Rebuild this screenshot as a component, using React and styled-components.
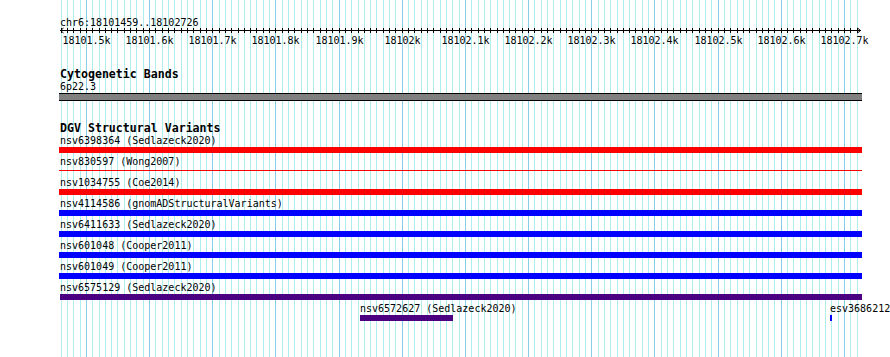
import React from 'react'
import styled, { createGlobalStyle } from 'styled-components'

// genome view: chr6:18101459..18102726 drawn from x=60
const VIEW_START = 18101459
const VIEW_END = 18102726
const ORIGIN = 60
const PX_PER_BP = 0.6317
const VIEW_LEFT = 59
const VIEW_RIGHT = 862
const PAGE_W = 890
const PAGE_H = 357

const bpToX = (bp) => ORIGIN + (bp - VIEW_START) * PX_PER_BP

const ticks = []
for (let bp = Math.ceil(VIEW_START / 10) * 10; bp <= VIEW_END; bp += 10) {
  ticks.push({ bp, x: Math.round(bpToX(bp)), major: bp % 100 === 0 })
}

const RED = '#ff0000'
const BLUE = '#0000ff'
const PURPLE = '#4b0082'

const rows = [
  [{ name: 'nsv6398364 (Sedlazeck2020)', start: 18100000, end: 18104000, color: RED }],
  [{ name: 'nsv830597 (Wong2007)', start: 18100000, end: 18104000, color: RED, thin: true }],
  [{ name: 'nsv1034755 (Coe2014)', start: 18100000, end: 18104000, color: RED }],
  [{ name: 'nsv4114586 (gnomADStructuralVariants)', start: 18100000, end: 18104000, color: BLUE }],
  [{ name: 'nsv6411633 (Sedlazeck2020)', start: 18100000, end: 18104000, color: BLUE }],
  [{ name: 'nsv601048 (Cooper2011)', start: 18100000, end: 18104000, color: BLUE }],
  [{ name: 'nsv601049 (Cooper2011)', start: 18100000, end: 18104000, color: BLUE }],
  [{ name: 'nsv6575129 (Sedlazeck2020)', start: 18101459, end: 18104000, color: PURPLE }],
  [
    { name: 'nsv6572627 (Sedlazeck2020)', start: 18101934, end: 18102081, color: PURPLE },
    { name: 'esv3686212', start: 18102678, end: 18102681, color: BLUE },
  ],
]

const App = () => {
  return (
    <>
      <GlobalStyle />
      <Page>
        <GridLayer width={PAGE_W} height={PAGE_H} shapeRendering="crispEdges">
          {ticks.map((t) => (
            <rect key={t.bp} x={t.x} y={0} width={1} height={PAGE_H}
              fill={t.major ? '#87ceeb' : '#afeeee'} />
          ))}
        </GridLayer>
        <Content>
          <Location>chr6:18101459..18102726</Location>
          <Ruler />
          <TrackTitle $gap={19}>Cytogenetic Bands</TrackTitle>
          <SmallLabel>6p22.3</SmallLabel>
          <BandBar />
          <TrackTitle $gap={20}>DGV Structural Variants</TrackTitle>
          {rows.map((row, i) => (
            <Row key={i}>
              {row.map((f) => {
                const x = Math.max(VIEW_LEFT, Math.round(bpToX(f.start)))
                const right = Math.min(VIEW_RIGHT, Math.round(bpToX(f.end)))
                return (
                  <Feature key={f.name} style={{ left: x }}>
                    <SmallLabel style={{ paddingLeft: Math.max(0, ORIGIN - x) }}>{f.name}</SmallLabel>
                    <FeatureBar $color={f.color} $thin={f.thin} style={{ width: right - x }} />
                  </Feature>
                )
              })}
            </Row>
          ))}
        </Content>
      </Page>
    </>
  )
}

const Ruler = () => (
  <RulerSvg width={PAGE_W} height={20}>
    <g shapeRendering="crispEdges">
      <rect x={60} y={2} width={801} height={1} fill="#000" />
      {ticks.map((t) => (
        <rect key={t.bp} x={t.x} y={0} width={1} height={5} fill="#000" />
      ))}
    </g>
    <polyline points="63.5,0 60.5,2.5 63.5,5" fill="none" stroke="#000" strokeWidth="1" />
    <polyline points="857.5,0 860.5,2.5 857.5,5" fill="none" stroke="#000" strokeWidth="1" />
    {ticks.filter((t) => t.major).map((t) => (
      <TickLabel key={t.bp} x={t.x + 0.5} y={16} textAnchor="middle">
        {t.bp / 1000}k
      </TickLabel>
    ))}
  </RulerSvg>
)

export default App

const GlobalStyle = createGlobalStyle`
  html, body {
    margin: 0;
    padding: 0;
    background: #fff;
  }
  body {
    font-family: "DejaVu Sans Mono", "Liberation Mono", monospace;
  }
`

const Page = styled.div`
  position: relative;
  width: 890px;
  height: 357px;
  overflow: hidden;
  background: #fff;
  color: #000;
  font-family: "DejaVu Sans Mono", "Liberation Mono", monospace;
`

const GridLayer = styled.svg`
  position: absolute;
  top: 0;
  left: 0;
  display: block;
`

const Content = styled.div`
  position: relative;
  padding-top: 17px;
`

const Location = styled.div`
  padding-left: 60px;
  font-size: 10px;
  line-height: 11px;
  white-space: nowrap;
`

const RulerSvg = styled.svg`
  display: block;
  overflow: visible;
`

const TickLabel = styled.text`
  font-family: "DejaVu Sans Mono", "Liberation Mono", monospace;
  font-size: 10px;
  fill: #000;
`

const TrackTitle = styled.div`
  margin-top: ${(p) => p.$gap}px;
  padding-left: 60px;
  font-size: 11.6px;
  font-weight: bold;
  line-height: 14px;
  white-space: nowrap;
`

const SmallLabel = styled.div`
  padding-left: 60px;
  font-size: 10px;
  line-height: 11px;
  white-space: nowrap;
`

const BandBar = styled.div`
  margin: 1px 0 0 59px;
  width: 803px;
  height: 8px;
  box-sizing: border-box;
  background: #808080;
  border-top: 1px solid #000;
  border-bottom: 1px solid #000;
`

const Row = styled.div`
  position: relative;
  height: 21px;
`

const Feature = styled.div`
  position: absolute;
  top: 0;
`

const FeatureBar = styled.div`
  margin-top: ${(p) => (p.$thin ? 3 : 1)}px;
  height: ${(p) => (p.$thin ? 1 : 6)}px;
  background: ${(p) => p.$color};
`
